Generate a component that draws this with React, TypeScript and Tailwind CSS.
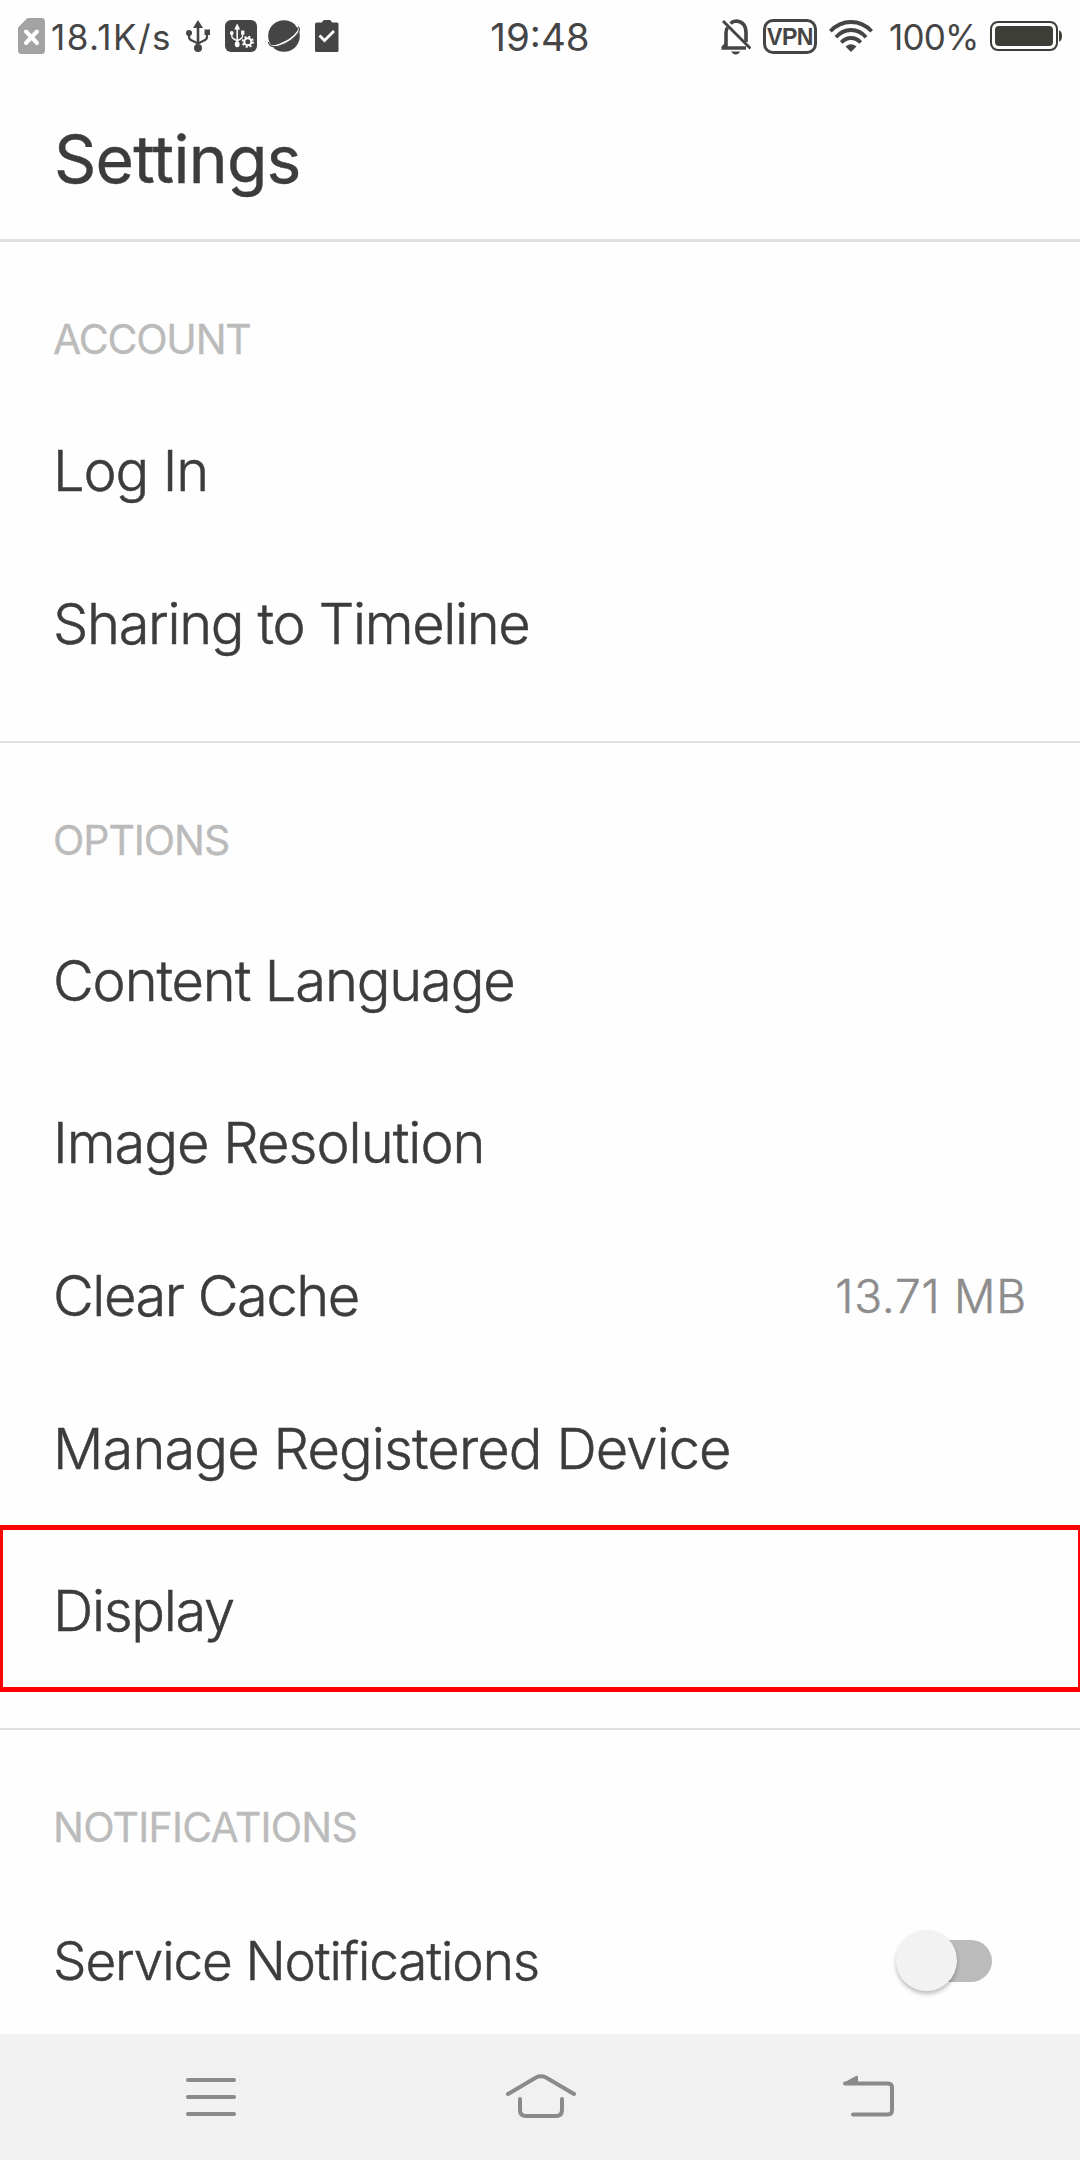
import type { ReactNode } from "react";

const INK = "#454545";

function UsbGlyph() {
  return (
    <g>
      <path d="M12 0 L17 8 H13.3 V24.6 H10.7 V8 H7 Z" />
      <circle cx="12" cy="28" r="4" />
      <circle cx="3" cy="13" r="3" />
      <rect x="18.5" y="9.5" width="5.5" height="5.5" />
      <path d="M3 14 V16.5 Q3 19.5 6 20.6 L12 23.5 L18 20.6 Q21 19.5 21 16.5 V13" fill="none" stroke="currentColor" strokeWidth="2.2" />
    </g>
  );
}

function StatusBar() {
  return (
    <div className="flex h-[74px] items-center justify-between pl-[18px] pr-[18px] text-[#454545]">
      <div className="flex w-[400px] items-center">
        <svg className="h-[36px] w-[27px] shrink-0 -translate-y-px" viewBox="0 0 27 36">
          <path d="M9.5 0 H23.5 Q27 0 27 3.5 V32.5 Q27 36 23.5 36 H3.5 Q0 36 0 32.5 V9.5 Z" fill="#a3a3a3" />
          <path d="M8 13.5 L19 25 M19 13.5 L8 25" stroke="#fff" strokeWidth="4" strokeLinecap="round" />
        </svg>
        <span className="ml-[6px] w-[127px] text-[35px] leading-none tracking-[1.4px] whitespace-nowrap">18.1K/s</span>
        <svg className="ml-[8px] h-[32px] w-[24px] shrink-0 -translate-y-px" viewBox="0 0 24 32" fill="currentColor">
          <UsbGlyph />
        </svg>
        <svg className="ml-[15px] h-[32px] w-[32px] shrink-0 -translate-y-px" viewBox="0 0 32 32">
          <rect width="32" height="32" rx="6" fill={INK} />
          <g transform="translate(5 3.5) scale(0.6 0.74)" fill="#fff" color="#fff">
            <UsbGlyph />
          </g>
          <circle cx="22.8" cy="21.8" r="6" fill={INK} />
          <circle cx="22.8" cy="21.8" r="3.5" fill="none" stroke="#fff" strokeWidth="2" />
          <circle cx="22.8" cy="21.8" r="5.1" fill="none" stroke="#fff" strokeWidth="2" strokeDasharray="2 2" />
        </svg>
        <svg className="ml-[11px] h-[32px] w-[32px] shrink-0 -translate-y-px" viewBox="0 0 32 32">
          <circle cx="16" cy="16" r="15.8" fill={INK} />
          <path d="M-1 21 Q0 29 11 25 Q24 20.500 30 12 Q33 7 28 5" fill="none" stroke="#fff" strokeWidth="2.2" />
          <path d="M0.500 22 Q1 28.500 11 26 Q25 21.500 30.500 12.500 Q32.500 8 30 6.800" fill="none" stroke={INK} strokeWidth="1.200" />
        </svg>
        <svg className="ml-[15px] h-[32px] w-[24px] shrink-0 -translate-y-px" viewBox="0 0 24 32">
          <path d="M2 2.500 H7 Q7.500 0 9.500 0 H14.500 Q16.500 0 17 2.500 H22 Q23.500 2.500 23.500 4 V30.500 Q23.500 32 22 32 H1.500 Q0 32 0 30.500 V4 Q0 2.500 2 2.500 Z" fill={INK} />
          <path d="M4.500 15.500 L9.500 20.500 L19 11" fill="none" stroke="#fff" strokeWidth="2.800" />
        </svg>
      </div>
      <span className="pt-px text-[38.500px] leading-none">19:48</span>
      <div className="flex w-[400px] items-center justify-end">
        <svg className="h-[36px] w-[30px] shrink-0" viewBox="0 0 30 36" fill="none" stroke={INK}>
          <path d="M5 28 V14 Q5 10.500 6.500 8.500 M9.500 4.500 Q12 2 15.500 2 Q25 3 25 14 V23" strokeWidth="3.600" />
          <path d="M0.500 29 H25 M1.500 29 L5 25" strokeWidth="3.400" />
          <path d="M2 2 L29.500 29.500" strokeWidth="3" />
          <path d="M10 32.500 H19.500 Q17.500 35.500 14.700 35.500 Q12 35.500 10 32.500 Z" fill={INK} stroke="none" />
        </svg>
        <div className="ml-[12px] flex h-[35px] w-[54px] shrink-0 -translate-y-px items-center justify-center rounded-[10px] border-[3px] border-[#454545] pt-[3px] font-['Liberation_Sans'] text-[23px] leading-none font-bold tracking-[-0.5px]">
          VPN
        </div>
        <svg className="ml-[12px] h-[32px] w-[44px] shrink-0 -translate-y-px" viewBox="0 0 44 32" fill="none" stroke={INK} strokeWidth="3.800">
          <path d="M1.300 11.300 Q10 2 22 2 Q34 2 42.700 11.300" />
          <path d="M7 17.300 Q13 10 22 10 Q31 10 37 17.300" />
          <path d="M12.300 22.500 Q16.500 18 22 18 Q27.500 18 31.700 22.500" />
          <path d="M16.500 26.500 Q22 22 27.500 26.500 L22 32 Z" fill={INK} stroke="none" />
        </svg>
        <span className="ml-[16px] w-[88px] text-[35px] leading-none tracking-[-0.8px] whitespace-nowrap">100%</span>
        <svg className="ml-[13px] h-[30px] w-[72px] shrink-0 -translate-y-px" viewBox="0 0 72 30">
          <rect x="1" y="1" width="66" height="28" rx="7" fill="none" stroke="#3c3e37" strokeWidth="2" />
          <rect x="5" y="5" width="58" height="20" rx="4" fill="#3c3e37" />
          <path d="M69 9.500 Q72 10 72 15 Q72 20 69 20.500 Z" fill="#3c3e37" />
        </svg>
      </div>
    </div>
  );
}

function SectionLabel({ className, children }: { className: string; children: ReactNode }) {
  return (
    <h2 className={`flex h-[100px] items-center text-[41px] leading-none text-[#bbbbbb] [-webkit-text-stroke:0.3px] ${className}`}>
      {children}
    </h2>
  );
}

function Row({ className, children }: { className: string; children: ReactNode }) {
  return (
    <div className={`flex items-center text-[56px] leading-none font-light [-webkit-text-stroke:0.5px] ${className}`}>{children}</div>
  );
}

export default function App() {
  return (
    <div className="flex h-[2160px] w-[1080px] flex-col overflow-hidden bg-[#fefefe] font-['Inter',sans-serif] text-[#3c3c3c]">
      <StatusBar />
      <header className="flex h-[168px] items-center border-b-[3px] border-[#e0e0e0] px-[54px] pt-[4px]">
        <h1 className="text-[66px] leading-none tracking-[-0.75px] [-webkit-text-stroke:0.4px]">Settings</h1>
      </header>

      <section className="h-[501px] border-b-2 border-[#e0e0e0] pr-[54px] pl-[53px] pt-[47px]">
        <SectionLabel className="tracking-[-1.2px]">ACCOUNT</SectionLabel>
        <Row className="mt-[6px] h-[152px] tracking-[-1.15px]">Log In</Row>
        <Row className="h-[154px] tracking-[-1.35px]">Sharing to Timeline</Row>
      </section>

      <section className="h-[987px] border-b-2 border-[#e0e0e0] pt-[47px]">
        <div className="pr-[54px] pl-[53px]">
          <SectionLabel className="tracking-[-1.05px]">OPTIONS</SectionLabel>
          <Row className="mt-[7px] h-[168px] tracking-[-1.15px]">Content Language</Row>
          <Row className="h-[156px] tracking-[-1px]">Image Resolution</Row>
          <Row className="h-[150px] justify-between tracking-[-1.45px]">
            <span>Clear Cache</span>
            <span className="-mr-px text-[46px] font-light tracking-[0.8px] text-[#8c8c8c]">13.71 MB</span>
          </Row>
          <Row className="h-[154px] pt-[2px] tracking-[-0.9px]">Manage Registered Device</Row>
        </div>
        <Row className="h-[167px] border-y-[5px] border-r-2 border-l-[3px] border-[#ff0000] pt-[4px] pl-[50px] tracking-[-1.3px]">
          Display
        </Row>
      </section>

      <section className="h-[304px] pr-[54px] pl-[53px] pt-[47px]">
        <SectionLabel className="tracking-[-0.75px]">NOTIFICATIONS</SectionLabel>
        <div className="mt-[10px] flex h-[147px] items-center justify-between">
          <span className="pt-[2px] text-[53px] leading-none font-light tracking-[-1.1px] [-webkit-text-stroke:0.5px]">
            Service Notifications
          </span>
          <div className="mr-[34px] flex h-[42px] w-[94px] items-center rounded-full bg-[#bbbbbb]">
            <div className="-ml-[2px] h-[61px] w-[61px] shrink-0 rounded-full bg-[#f2f2f2] shadow-[0_3px_4px_rgba(0,0,0,0.25)]" />
          </div>
        </div>
      </section>

      <nav className="flex h-[126px] items-center bg-[#f1f1f1] text-[#8a8a8a]">
        <svg className="ml-[186px] h-[38px] w-[50px]" viewBox="0 0 50 38" stroke="currentColor" strokeWidth="4" strokeLinecap="round">
          <path d="M2 2 H48 M2 19 H48 M2 36 H48" />
        </svg>
        <svg className="ml-[270px] h-[44px] w-[70px] -translate-y-px" viewBox="0 0 70 44" fill="none" stroke="currentColor" strokeWidth="4" strokeLinecap="round">
          <path d="M2 20 L30 3.500 Q35 1 40 3.500 L68 20" />
          <path d="M14 25 V36 Q14 42 20 42 H50 Q56 42 56 36 V25" />
        </svg>
        <svg className="ml-[267px] h-[42px] w-[51px] -translate-y-px" viewBox="0 0 51 42" fill="none" stroke="currentColor" strokeWidth="4" strokeLinecap="round">
          <path d="M2 8.500 H45 Q49 8.500 49 12.500 V35 Q49 39.500 45 39.500 H10" />
          <path d="M1 7.500 L13.500 0.800 Q15 0.500 15 2 V9 H1.500 Z" fill="currentColor" stroke="none" />
        </svg>
      </nav>
    </div>
  );
}
